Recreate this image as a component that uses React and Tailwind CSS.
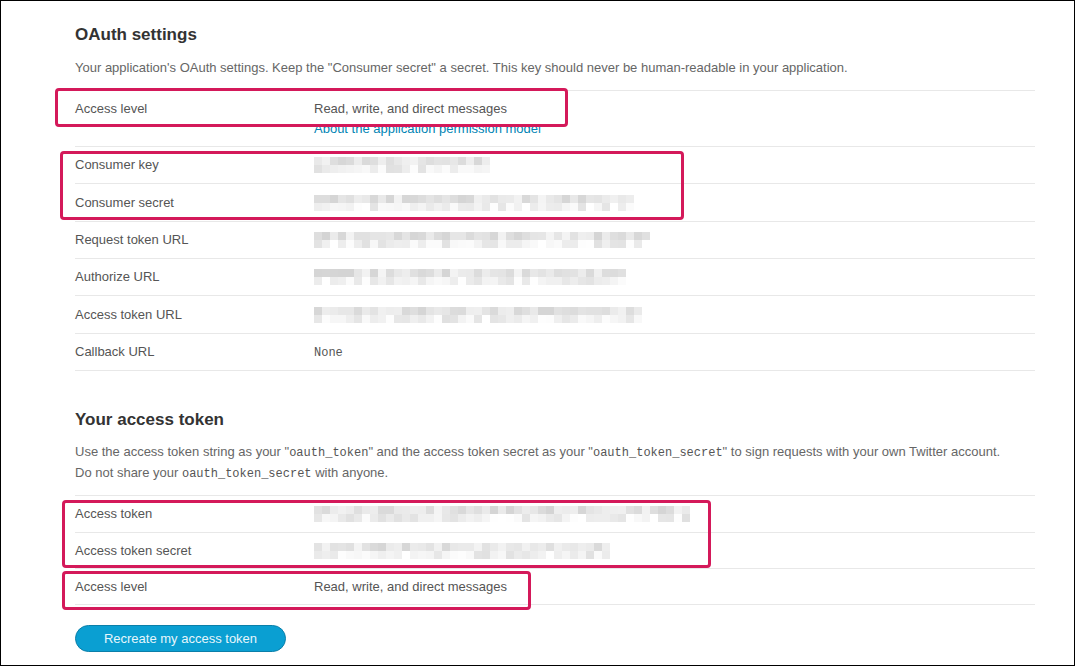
import React from 'react';

// blurred secret values are drawn as a grid of gray cells
const Pixels = ({ cols, seed }) => {
  let s = seed;
  const rand = () => {
    s = (s * 9301 + 49297) % 233280;
    return s / 233280;
  };
  const cells = [];
  for (let r = 0; r < 2; r++) {
    for (let c = 0; c < cols; c++) {
      const base = r === 0 ? 212 : 224;
      const v = Math.round(base + rand() * 32);
      cells.push(
        <div key={r + '-' + c} className="h-[8px]" style={{ backgroundColor: `rgb(${v},${v},${v})` }} />
      );
    }
  }
  return (
    <div className="grid" style={{ gridTemplateColumns: `repeat(${cols}, 8px)` }}>
      {cells}
    </div>
  );
};

const Row = ({ label, children, h = 'h-[37px]' }) => (
  <div className={`flex items-center border-b border-[#e8e8e8] ${h}`}>
    <div className="w-[239px] shrink-0 text-[#555]">{label}</div>
    <div className="flex-1 text-[#555]">{children}</div>
  </div>
);

const Code = ({ children }) => (
  <span className="font-['Liberation_Mono',monospace] text-[12px] text-[#555]">{children}</span>
);

const Highlight = ({ className }) => (
  <div className={`absolute border-[3px] border-[#d4195a] rounded-[4px] pointer-events-none ${className}`} />
);

export default function App() {
  const oauthRows = [
    { label: 'Consumer key', cols: 22, seed: 11 },
    { label: 'Consumer secret', cols: 40, seed: 27, h: 'h-[38px]' },
    { label: 'Request token URL', cols: 42, seed: 53 },
    { label: 'Authorize URL', cols: 39, seed: 71 },
    { label: 'Access token URL', cols: 41, seed: 97, h: 'h-[38px]' },
  ];

  return (
    <div className="relative w-[1075px] h-[666px] overflow-hidden bg-white border border-black font-['Liberation_Sans',Arial,sans-serif] text-[13px]">
      <div className="pl-[74px] pt-[22px] w-[1034px]">
        <h2 className="text-[17px] leading-[24px] font-bold text-[#333]">OAuth settings</h2>
        <p className="mt-[11px] leading-[20px] text-[#666]">
          Your application's OAuth settings. Keep the "Consumer secret" a secret. This key should never be human-readable in your application.
        </p>

        <div className="mt-[12px] border-t border-[#e8e8e8]">
          <div className="flex pt-[8px] pb-[7px] border-b border-[#e8e8e8] leading-[20px]">
            <div className="w-[239px] shrink-0 text-[#555]">Access level</div>
            <div className="flex-1">
              <div className="text-[#555]">Read, write, and direct messages</div>
              <a className="text-[#0084b4]">About the application permission model</a>
            </div>
          </div>
          {oauthRows.map((r) => (
            <Row key={r.label} label={r.label} h={r.h}>
              <Pixels cols={r.cols} seed={r.seed} />
            </Row>
          ))}
          <Row label="Callback URL">
            <Code>None</Code>
          </Row>
        </div>

        <h2 className="mt-[37px] text-[17px] leading-[24px] font-bold text-[#333]">Your access token</h2>
        <p className="mt-[10px] leading-[20px] text-[#666]">
          Use the access token string as your "<Code>oauth_token</Code>" and the access token secret as your "<Code>oauth_token_secret</Code>" to sign requests with your own Twitter account.
          <br />
          Do not share your <Code>oauth_token_secret</Code> with anyone.
        </p>

        <div className="mt-[11px] border-t border-[#e8e8e8]">
          <Row label="Access token">
            <Pixels cols={47} seed={131} />
          </Row>
          <Row label="Access token secret" h="h-[36px]">
            <Pixels cols={37} seed={157} />
          </Row>
          <Row label="Access level" h="h-[36px]">Read, write, and direct messages</Row>
        </div>

        <button className="mt-[20px] w-[211px] h-[27px] rounded-full bg-[#0a9fd2] border border-[#0b7fa9] text-[#e6f6fc] text-[13px]">
          Recreate my access token
        </button>
      </div>

      <Highlight className="left-[54px] top-[87px] w-[513px] h-[39px]" />
      <Highlight className="left-[59px] top-[150px] w-[624px] h-[69px]" />
      <Highlight className="left-[61px] top-[499px] w-[649px] h-[68px]" />
      <Highlight className="left-[61px] top-[570px] w-[469px] h-[39px]" />
    </div>
  );
}
